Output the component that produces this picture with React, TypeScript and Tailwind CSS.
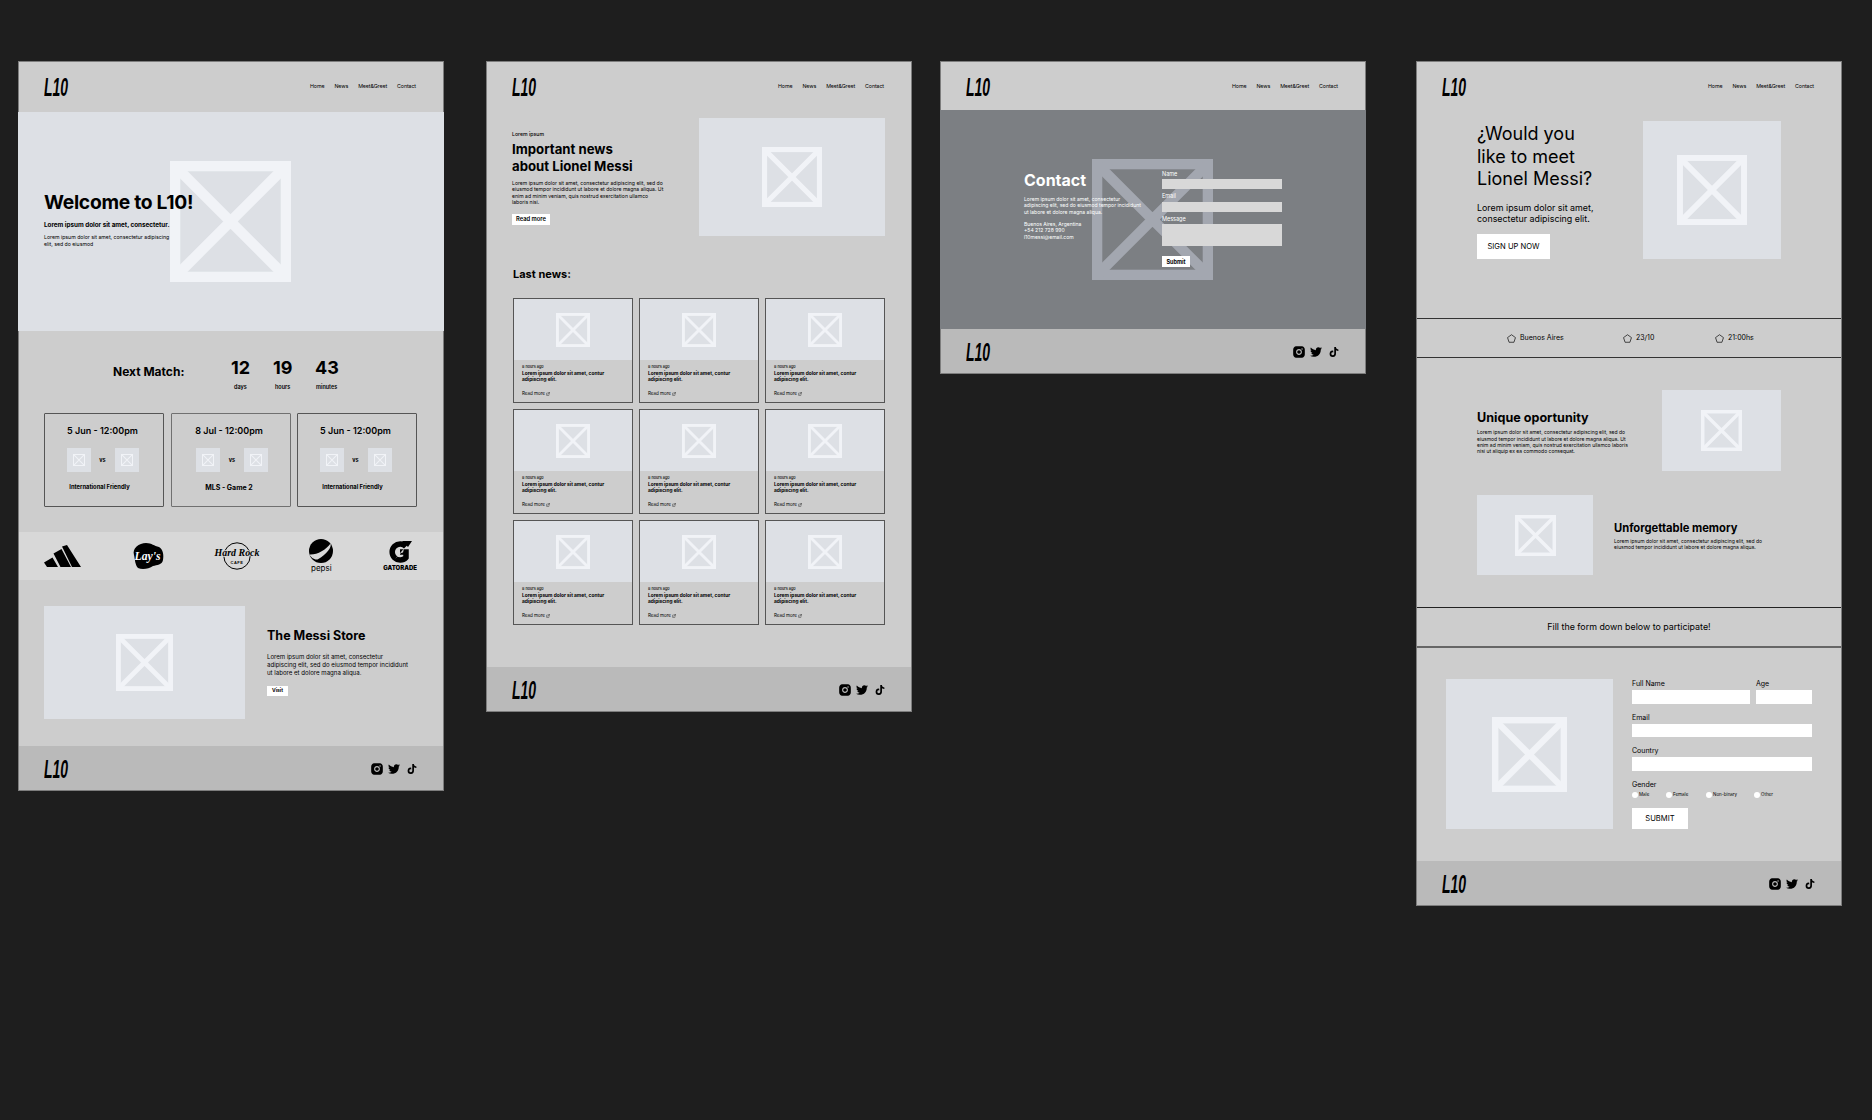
import { ExternalLink } from 'lucide-react';
import { FaTwitter, FaTiktok } from 'react-icons/fa';
import { RiInstagramFill } from 'react-icons/ri';

const LOREM_NEWS = 'Lorem ipsum dolor sit amet, contur adipiscing elit.';

// placeholder picture: box with a cross
function Ph({ size, color = '#f1f3f7' }: { size: number; color?: string }) {
  return (
    <svg width={size} height={size} viewBox="0 0 100 100" fill="none" stroke={color} strokeWidth="8.5" className="shrink-0">
      <rect x="4.25" y="4.25" width="91.5" height="91.5" />
      <path d="M6 6 94 94M94 6 6 94" />
    </svg>
  );
}

function Logo() {
  return (
    <span className="mt-[1px] block origin-left scale-x-[.56] font-['Liberation_Sans'] text-[25px] leading-none font-bold text-black italic">L10</span>
  );
}

function Nav({ className = 'h-[51px]' }: { className?: string }) {
  return (
    <div className={`flex items-center justify-between pr-[28px] pl-[26px] ${className}`}>
      <Logo />
      <div className="flex gap-[10px] text-[5.3px] tracking-[-.1px] text-black">
        <span>Home</span>
        <span>News</span>
        <span>Meet&amp;Greet</span>
        <span>Contact</span>
      </div>
    </div>
  );
}

function Footer() {
  return (
    <div className="flex h-[45px] items-center justify-between bg-[#bababa] pr-[27px] pl-[26px]">
      <Logo />
      <div className="flex items-center text-black">
        <RiInstagramFill size={14} />
        <FaTwitter size={12} className="ml-[4px]" />
        <FaTiktok size={10} className="ml-[7px]" />
      </div>
    </div>
  );
}

function Frame({ className, children }: { className: string; children: React.ReactNode }) {
  return <div className={`w-[426px] shrink-0 overflow-hidden bg-[#cdcdcd] outline-1 -outline-offset-1 outline-[#7d7d7d] ${className}`}>{children}</div>;
}

function MatchCard({ date, label, rowClass = '', labelClass = 'mr-[6px] text-[5.8px]', bold }: { date: string; label: string; rowClass?: string; labelClass?: string; bold?: boolean }) {
  return (
    <div className={`flex h-[94px] w-[120px] flex-col items-center rounded-[1px] border pt-[10px] pr-[3px] ${bold ? 'border-[#707070]' : 'border-[#555]'}`}>
      <div className="text-[9px] leading-[13px] font-semibold text-black">{date}</div>
      <div className={`mt-[11px] flex items-center gap-[8px] ${rowClass}`}>
        <div className="flex size-[24px] items-center justify-center bg-[#dde0e5]"><Ph size={12} /></div>
        <span className="w-[8px] text-center text-[5.5px] font-bold">vs</span>
        <div className="flex size-[24px] items-center justify-center bg-[#dde0e5]"><Ph size={12} /></div>
      </div>
      <div className={`mt-[11px] font-bold text-black ${labelClass}`}>{label}</div>
    </div>
  );
}

function NewsCard() {
  return (
    <div className="h-[105px] border border-[#555]">
      <div className="flex h-[61px] items-center justify-center bg-[#dde0e5]"><Ph size={34} /></div>
      <div className="pt-[4px] pl-[8px]">
        <div className="text-[3.8px] leading-[5px] font-medium">8 hours ago</div>
        <div className="mt-[1px] w-[90px] text-[4.85px] leading-[6.2px] font-bold text-black">{LOREM_NEWS}</div>
        <div className="mt-[9px] flex items-center gap-[1px] text-[4.5px] leading-[5px]">Read more <ExternalLink size={4} /></div>
      </div>
    </div>
  );
}

function Pin() {
  return (
    <svg width="9" height="9" viewBox="0 0 10 10" fill="none" stroke="#111" strokeWidth=".8">
      <path d="M5 .8 9.4 4 7.7 9.2H2.3L.6 4Z" />
    </svg>
  );
}

function Radio({ label, className }: { label: string; className: string }) {
  return (
    <div className={`flex items-center gap-[1px] text-[4.5px] ${className}`}>
      <span className="size-[6px] rounded-full bg-white" />
      {label}
    </div>
  );
}

function Field({ label, className }: { label: string; className: string }) {
  return (
    <div className={className}>
      <div className="text-[7px] leading-[9px] text-black">{label}</div>
      <div className="mt-[2px] h-[13.5px] bg-white" />
    </div>
  );
}

function Sponsors() {
  return (
    <div className="flex h-[48px] items-center justify-between bg-[#d8d8d8] pr-[27px] pl-[26px]">
      <svg width="37" height="22" viewBox="0 0 37 22">
        <path d="M0 17.5 8.5 12.5 14 22H3Z M9.5 8.5 17.5 4 27 22H16.5Z M18 1.5 23 0 37 22H28Z" />
      </svg>
      <svg width="33" height="28" viewBox="0 0 33 28" className="overflow-visible">
        <path d="M3 13C1 6 8 1 15 1c6 0 8 3 13 4 4 2 5 8 4 13-1 5-6 5-10 6-4 3-11 4-15 2-3-3-3-9-4-13Z" />
        <text x="16.5" y="18" textAnchor="middle" textLength="26" lengthAdjust="spacingAndGlyphs" fontFamily="Liberation Serif" fontStyle="italic" fontWeight="700" fontSize="13" fill="#fff">Lay's</text>
      </svg>
      <svg width="46" height="28" viewBox="0 0 46 28" className="overflow-visible">
        <circle cx="23" cy="14" r="13.2" fill="none" stroke="#000" strokeWidth="1" />
        <text x="23" y="13.5" textAnchor="middle" textLength="45" lengthAdjust="spacingAndGlyphs" fontFamily="Liberation Serif" fontStyle="italic" fontWeight="700" fontSize="9.5" fill="#000" stroke="#d8d8d8" strokeWidth="1.5" paintOrder="stroke">Hard Rock</text>
        <text x="23" y="21.5" textAnchor="middle" fontFamily="Liberation Sans" fontWeight="700" fontSize="4" letterSpacing=".5" fill="#000">CAFE</text>
      </svg>
      <div className="flex flex-col items-center">
        <svg width="24" height="24" viewBox="0 0 24 24">
          <circle cx="12" cy="12" r="12" />
          <path d="M.6 15.5C8 16 17 11 21.5 4.5 23 8 18 15 8.5 20.5 5 21 1.5 18 .6 15.5Z" fill="#d8d8d8" />
        </svg>
        <span className="mt-[1px] text-[8px] leading-[9px]">pepsi</span>
      </div>
      <div className="flex flex-col items-center">
        <svg width="23" height="22" viewBox="0 0 23 22">
          <path d="M17 5.5A8 8 0 1 0 17 16.5V11H11" fill="none" stroke="#000" strokeWidth="5.5" />
          <path d="M13 0 23 0 19 6Z" />
          <path d="M6 18 15 7.5 14 11.5 12 12Z" fill="#d8d8d8" />
        </svg>
        <span className="mt-[1px] text-[6px] leading-[7px] font-black">GATORADE</span>
      </div>
    </div>
  );
}

export default function App() {
  return (
    <div className="flex min-h-[1120px] items-start bg-[#1e1e1e] pt-[61px] pl-[18px] font-[Inter,sans-serif] text-black">
      {/* Home */}
      <Frame className="h-[730px]">
        <Nav />
        <div className="relative flex h-[219px] flex-col justify-center bg-[#dde0e5] pb-[6px] pl-[26px]">
          <div className="absolute top-[49px] left-[152px]"><Ph size={121} /></div>
          <div className="relative">
            <div className="text-[19.3px] leading-[24px] font-bold tracking-[-.3px]">Welcome to L10!</div>
            <div className="mt-[7px] text-[6.3px] leading-[8px] font-bold">Lorem ipsum dolor sit amet, consectetur.</div>
            <div className="mt-[5px] text-[5.2px] leading-[6.3px]">Lorem ipsum dolor sit amet, consectetur adipiscing<br />elit, sed do eiusmod</div>
          </div>
        </div>
        <div className="h-[201px] px-[26px]">
          <div className="flex items-start pt-[26px] pl-[69px]">
            <div className="mt-[7px] w-[118px] text-[12px] leading-[16px] font-bold">Next Match:</div>
            <div className="flex w-[42px] flex-col items-start">
              <span className="text-[18px] leading-[22px] font-bold">12</span>
              <span className="mt-[4px] ml-[3px] text-[5.5px] font-semibold">days</span>
            </div>
            <div className="flex w-[42px] flex-col items-start">
              <span className="text-[18px] leading-[22px] font-bold">19</span>
              <span className="mt-[4px] ml-[2px] text-[5.5px] font-semibold">hours</span>
            </div>
            <div className="flex flex-col items-start">
              <span className="text-[18px] leading-[22px] font-bold">43</span>
              <span className="mt-[4px] ml-[1px] text-[5.5px] font-semibold">minutes</span>
            </div>
          </div>
          <div className="mt-[22px] flex justify-between pr-[1px]">
            <MatchCard date="5 Jun - 12:00pm" label="International Friendly" />
            <MatchCard date="8 Jul - 12:00pm" label="MLS - Game 2" rowClass="ml-[6px]" labelClass="text-[7px]" bold />
            <MatchCard date="5 Jun - 12:00pm" label="International Friendly" />
          </div>
        </div>
        <Sponsors />
        <div className="flex h-[166px] items-start gap-[22px] pl-[26px]">
          <div className="mt-[26px] flex h-[113px] w-[201px] items-center justify-center bg-[#dde0e5]"><Ph size={57} /></div>
          <div className="pt-[48px]">
            <div className="text-[12.5px] leading-[16px] font-bold">The Messi Store</div>
            <div className="mt-[9px] text-[6.1px] leading-[8px] whitespace-nowrap">Lorem ipsum dolor sit amet, consectetur<br />adipiscing elit, sed do eiusmod tempor incididunt<br />ut labore et dolore magna aliqua.</div>
            <div className="mt-[9px] flex h-[10px] w-[21px] items-center justify-center bg-white text-[5px] font-bold">Visit</div>
          </div>
        </div>
        <Footer />
      </Frame>

      {/* News */}
      <Frame className="ml-[42px] h-[651px]">
        <Nav />
        <div className="flex justify-between pt-[6px] pr-[27px] pl-[26px]">
          <div className="w-[160px] pt-[12px]">
            <div className="text-[5.2px] leading-[8px] font-medium">Lorem ipsum</div>
            <div className="mt-[3px] text-[13.2px] leading-[16.5px] font-bold">Important news<br />about Lionel Messi</div>
            <div className="mt-[6px] text-[5.1px] leading-[6.4px] whitespace-nowrap">Lorem ipsum dolor sit amet, consectetur adipiscing elit, sed do<br />eiusmod tempor incididunt ut labore et dolore magna aliqua. Ut<br />enim ad minim veniam, quis nostrud exercitation ullamco<br />laboris nisi.</div>
            <div className="mt-[8px] flex h-[11px] w-[38px] items-center justify-center bg-white text-[5.8px] font-semibold">Read more</div>
          </div>
          <div className="flex h-[118px] w-[186px] items-center justify-center bg-[#dde0e5]"><Ph size={60} /></div>
        </div>
        <div className="mt-[30px] pl-[27px] text-[11px] leading-[16px] font-bold">Last news:</div>
        <div className="mt-[16px] grid grid-cols-3 gap-x-[6px] gap-y-[6px] px-[27px]">
          {[0, 1, 2, 3, 4, 5, 6, 7, 8].map(n => <NewsCard key={n} />)}
        </div>
        <div className="mt-[42px]"><Footer /></div>
      </Frame>

      {/* Contact */}
      <Frame className="ml-[28px] h-[313px]">
        <Nav className="h-[49px] pt-[2px]" />
        <div className="relative flex h-[219px] items-center bg-[#7c7f83] pl-[84px] text-white">
          <div className="absolute top-[49px] left-[152px]"><Ph size={121} color="#a3a7b0" /></div>
          <div className="relative w-[122px] self-start pt-[59px]">
            <div className="text-[16px] leading-[22px] font-bold">Contact</div>
            <div className="mt-[5px] text-[5.05px] leading-[6.3px] whitespace-nowrap">Lorem ipsum dolor sit amet, consectetur<br />adipiscing elit, sed do eiusmod tempor incididunt<br />ut labore et dolore magna aliqua.</div>
            <div className="mt-[6px] text-[5.05px] leading-[6.4px]">Buenos Aires, Argentina<br />+54 212 728 990<br />l10messi@email.com</div>
          </div>
          <div className="relative ml-[16px] w-[120px] self-start pt-[60px] text-[5.5px] leading-[8px]">
            <div>Name</div>
            <div className="mt-[1px] h-[10px] bg-[#d8d8d8]" />
            <div className="mt-[3px]">Email</div>
            <div className="mt-[2px] h-[10px] bg-[#d8d8d8]" />
            <div className="mt-[3px]">Message</div>
            <div className="mt-[1px] h-[22px] bg-[#d8d8d8]" />
            <div className="mt-[10px] flex h-[11px] w-[28px] items-center justify-center bg-white font-bold text-black">Submit</div>
          </div>
        </div>
        <Footer />
      </Frame>

      {/* Meet & Greet */}
      <Frame className="ml-[50px] h-[845px]">
        <Nav />
        <div className="flex h-[206px] pl-[61px]">
          <div className="w-[166px] pt-[11px]">
            <div className="text-[18px] leading-[22.5px]">¿Would you<br />like to meet<br />Lionel Messi?</div>
            <div className="mt-[11px] text-[8.9px] leading-[11.3px]">Lorem ipsum dolor sit amet,<br />consectetur adipiscing elit.</div>
            <div className="mt-[10px] flex h-[25px] w-[73px] items-center justify-center bg-white text-[7.6px]">SIGN UP NOW</div>
          </div>
          <div className="mt-[9px] flex size-[138px] items-center justify-center bg-[#dde0e5]"><Ph size={70} /></div>
        </div>
        <div className="flex h-[40px] items-center border-y border-[#333] pl-[91px] text-[7px]">
          <div className="flex w-[116px] items-center gap-[4px]"><Pin />Buenos Aires</div>
          <div className="flex w-[92px] items-center gap-[4px]"><Pin />23/10</div>
          <div className="flex items-center gap-[4px]"><Pin />21:00hs</div>
        </div>
        <div className="h-[249px] pt-[32px] pl-[61px]">
          <div className="flex items-center">
            <div className="w-[185px] pt-[4px]">
              <div className="text-[12.6px] leading-[16px] font-bold">Unique oportunity</div>
              <div className="mt-[3px] text-[5px] leading-[6.4px] whitespace-nowrap">Lorem ipsum dolor sit amet, consectetur adipiscing elit, sed do<br />eiusmod tempor incididunt ut labore et dolore magna aliqua. Ut<br />enim ad minim veniam, quis nostrud exercitation ullamco laboris<br />nisi ut aliquip ex ea commodo consequat.</div>
            </div>
            <div className="flex h-[81px] w-[119px] items-center justify-center bg-[#dde0e5]"><Ph size={41} /></div>
          </div>
          <div className="mt-[24px] flex items-center gap-[21px]">
            <div className="flex h-[80px] w-[116px] items-center justify-center bg-[#dde0e5]"><Ph size={41} /></div>
            <div className="pt-[1px]">
              <div className="text-[11.2px] leading-[15px] font-bold">Unforgettable memory</div>
              <div className="mt-[2px] text-[5px] leading-[6.4px] whitespace-nowrap">Lorem ipsum dolor sit amet, consectetur adipiscing elit, sed do<br />eiusmod tempor incididunt ut labore et dolore magna aliqua.</div>
            </div>
          </div>
        </div>
        <div className="flex h-[41px] items-center justify-center border-t border-b-2 border-t-[#222] border-b-[#666] text-[8.9px]">Fill the form down below to participate!</div>
        <div className="flex h-[213px] pt-[31px] pl-[30px]">
          <div className="flex h-[150px] w-[167px] items-center justify-center bg-[#dde0e5]"><Ph size={75} /></div>
          <div className="ml-[19px] w-[180px]">
            <div className="flex gap-[6px]">
              <Field label="Full Name" className="w-[118px]" />
              <Field label="Age" className="w-[56px]" />
            </div>
            <Field label="Email" className="mt-[9px]" />
            <Field label="Country" className="mt-[9px]" />
            <div className="mt-[9px] text-[7px] leading-[9px]">Gender</div>
            <div className="mt-[3px] flex">
              <Radio label="Male" className="w-[34px]" />
              <Radio label="Female" className="w-[40px]" />
              <Radio label="Non-binary" className="w-[48px]" />
              <Radio label="Other" className="w-[30px]" />
            </div>
            <div className="mt-[10px] flex h-[21px] w-[56px] items-center justify-center bg-white text-[7.6px]">SUBMIT</div>
          </div>
        </div>
        <Footer />
      </Frame>
    </div>
  );
}
